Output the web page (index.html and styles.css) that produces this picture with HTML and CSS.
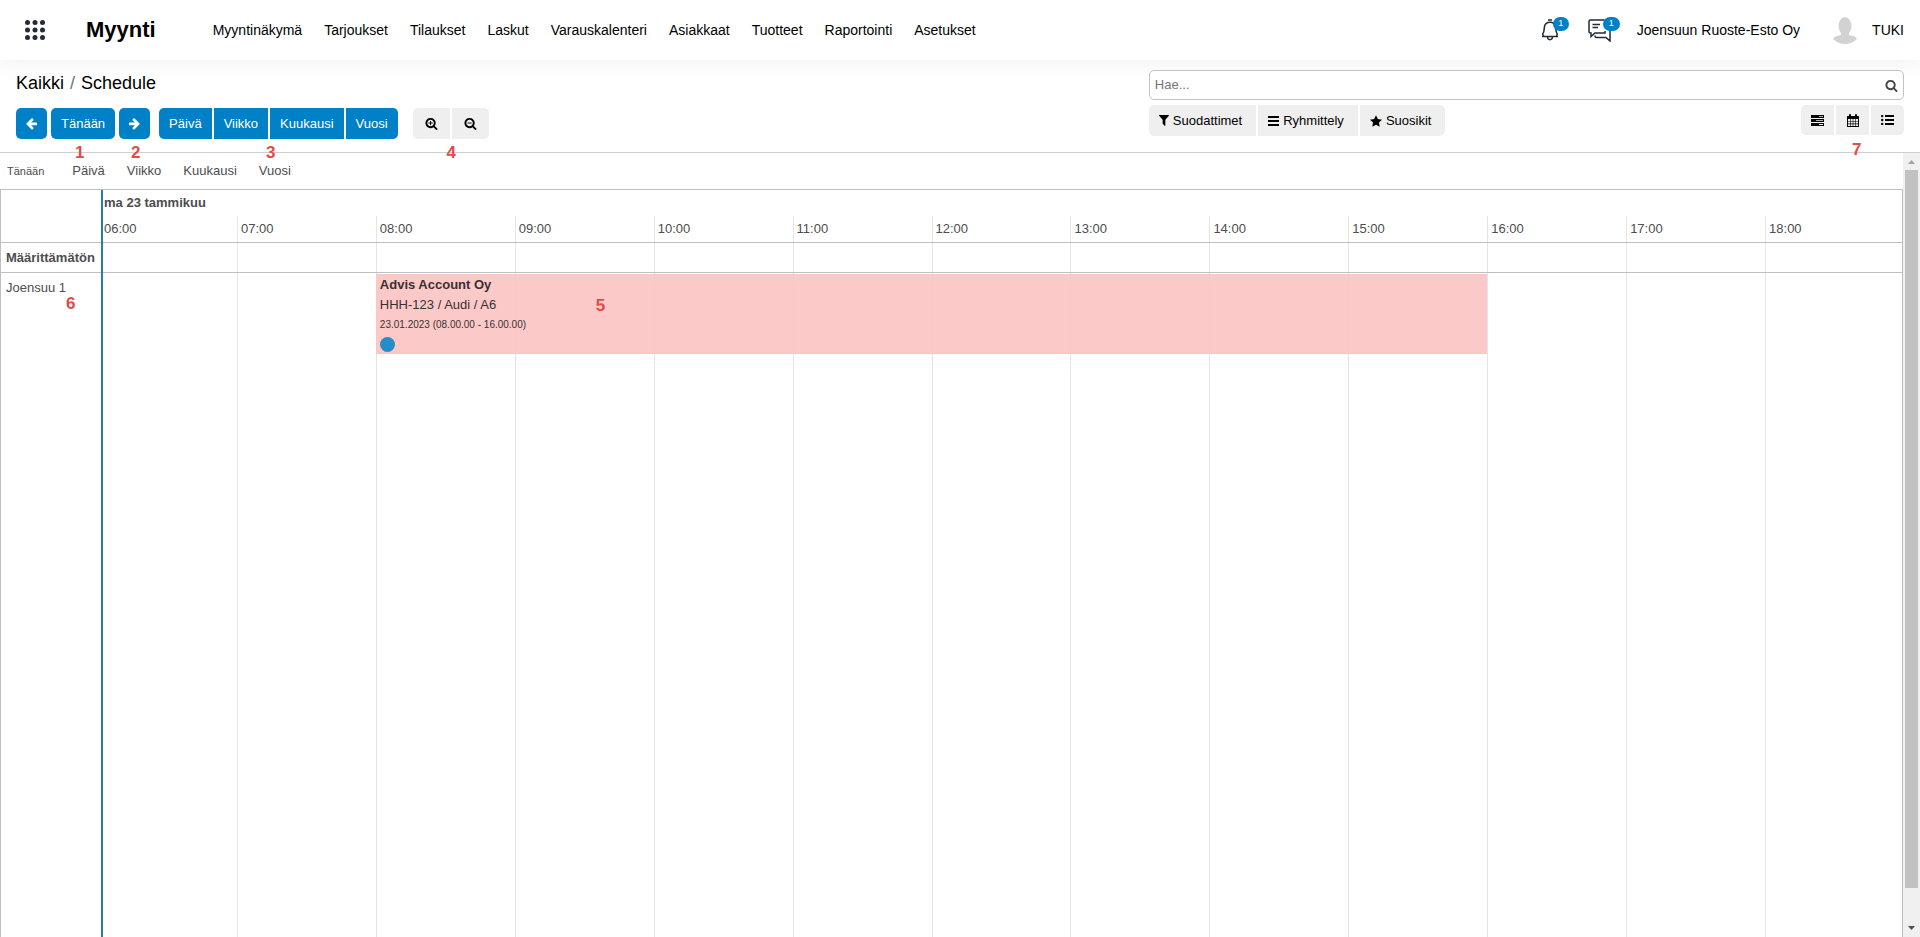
FILE: index.html
```html
<!DOCTYPE html>
<html lang="fi">
<head>
<meta charset="utf-8">
<title>Myynti - Schedule</title>
<link rel="stylesheet" href="styles.css">
</head>
<body>
<svg class="defs" aria-hidden="true">
  <symbol id="arrow" viewBox="0 0 1792 1792"><path d="M1664 896v128q0 53-32.5 90.5t-84.5 37.5h-704l293 294q38 36 38 90t-38 90l-75 76q-37 37-90 37-52 0-91-37l-651-652q-37-37-37-90 0-52 37-91l651-650q38-38 91-38 52 0 90 38l75 74q38 38 38 91t-38 91l-293 293h704q52 0 84.5 37.5t32.5 90.5z"/></symbol>
  <symbol id="search" viewBox="0 0 1792 1792"><path d="M1216 832q0-185-131.5-316.5t-316.5-131.5-316.5 131.5-131.5 316.5 131.5 316.5 316.5 131.5 316.5-131.5 131.5-316.5zm512 832q0 52-38 90t-90 38q-54 0-90-38l-343-342q-179 124-399 124-143 0-273.5-55.5t-225-150-150-225-55.5-273.5 55.5-273.5 150-225 225-150 273.5-55.5 273.5 55.5 225 150 150 225 55.5 273.5q0 220-124 399l343 343q37 37 37 90z"/></symbol>
</svg>

<header class="topbar">
  <button class="apps" type="button" aria-label="Sovellukset">
    <svg width="20" height="20" viewBox="0 0 20 20"><g fill="#222b36"><circle cx="2.5" cy="2.5" r="2.5"/><circle cx="10" cy="2.5" r="2.5"/><circle cx="17.5" cy="2.5" r="2.5"/><circle cx="2.5" cy="10" r="2.5"/><circle cx="10" cy="10" r="2.5"/><circle cx="17.5" cy="10" r="2.5"/><circle cx="2.5" cy="17.5" r="2.5"/><circle cx="10" cy="17.5" r="2.5"/><circle cx="17.5" cy="17.5" r="2.5"/></g></svg>
  </button>
  <a class="brand" href="#">Myynti</a>
  <nav class="menu">
    <a href="#">Myyntinäkymä</a>
    <a href="#">Tarjoukset</a>
    <a href="#">Tilaukset</a>
    <a href="#">Laskut</a>
    <a href="#">Varauskalenteri</a>
    <a href="#">Asiakkaat</a>
    <a href="#">Tuotteet</a>
    <a href="#">Raportointi</a>
    <a href="#">Asetukset</a>
  </nav>
  <div class="tray">
    <button class="tray-btn bell" type="button" aria-label="Toiminnot">
      <svg width="18" height="22" viewBox="0 0 18 22" fill="none" stroke="#222b36" stroke-width="1.5"><path d="M7 1h4M1 17.500h16M2.500 17.500c0-1-.5-1.500-.8-2.500 1.800-2 1.300-5 1.800-7.500C4 4.800 6 3.200 9 3.200s5 1.600 5.500 4.300c.5 2.500 0 5.500 1.800 7.500-.3 1-.8 1.500-.8 2.500M6.500 18c.3 3.500 4.700 3.500 5 0"/></svg>
      <span class="count">1</span>
    </button>
    <button class="tray-btn chat" type="button" aria-label="Viestit">
      <svg width="23" height="23" viewBox="0 0 23 23" fill="none" stroke="#222b36" stroke-width="1.500"><path d="M17 12v2H7l-4 3.500V14H2.500Q1 14 1 12.500v-10Q1 1 2.500 1h13Q17 1 17 2.500M4.500 5.500H12M4.500 8.500H10M19 9h1.500Q22 9 22 10.500V22l-4-3.500H8.500Q7 18.500 7 17v-.5"/></svg>
      <span class="count">1</span>
    </button>
    <a class="company" href="#">Joensuun Ruoste-Esto Oy</a>
    <a class="user" href="#">
      <svg width="26" height="27" viewBox="0 0 26 27" fill="#d2d2d2"><ellipse cx="13" cy="9" rx="6.500" ry="9"/><path d="M9 14h8v4q7 1 8 4-5 5-12 5T1 22q1-3 8-4z"/></svg>
      TUKI</a>
  </div>
</header>

<section class="panel">
  <div class="panel-left">
    <div class="crumbs"><a href="#">Kaikki</a><span class="slash">/</span><span>Schedule</span></div>
    <div class="actions">
      <button class="btn primary square" type="button" aria-label="Edellinen"><svg class="ic" ><use href="#arrow"/></svg></button>
      <div class="pin-host"><button class="btn primary" type="button">Tänään</button><span class="pin pin-today">1</span></div>
      <div class="pin-host"><button class="btn primary square" type="button" aria-label="Seuraava"><svg class="ic flip"><use href="#arrow"/></svg></button><span class="pin pin-next">2</span></div>
      <div class="group scale pin-host">
        <button class="btn primary" type="button">Päivä</button>
        <button class="btn primary" type="button">Viikko</button>
        <button class="btn primary" type="button">Kuukausi</button>
        <button class="btn primary" type="button">Vuosi</button>
        <span class="pin pin-scale">3</span>
      </div>
      <div class="group zoom pin-host">
        <button class="btn" type="button" aria-label="Lähennä"><svg class="ic" viewBox="0 0 1792 1792"><use href="#search"/><path d="M480 768h576v128H480zM704 544h128v576H704z"/></svg></button>
        <button class="btn" type="button" aria-label="Loitonna"><svg class="ic" viewBox="0 0 1792 1792"><use href="#search"/><path d="M480 768h576v128H480z"/></svg></button>
        <span class="pin pin-zoom">4</span>
      </div>
    </div>
  </div>
  <div class="panel-right">
    <div class="searchbox">
      <input type="text" placeholder="Hae..." aria-label="Hae">
      <svg class="ic"><use href="#search"/></svg>
    </div>
    <div class="filters">
      <div class="group">
        <button class="btn" type="button"><svg width="10" height="11" viewBox="192 256 1410 1420" preserveAspectRatio="none"><path d="M1595 295q17 41-14 70l-493 493v742q0 42-39 59-13 5-25 5-27 0-45-19l-256-256q-19-19-19-45v-486l-493-493q-31-29-14-70 17-39 59-39h1280q42 0 59 39z"/></svg>Suodattimet</button>
        <button class="btn" type="button"><svg width="11" height="10" viewBox="0 0 11 10"><path d="M0 0h11v2H0zM0 4h11v2H0zM0 8h11v2H0z"/></svg>Ryhmittely</button>
        <button class="btn" type="button"><svg width="12" height="12" viewBox="0 0 24 24"><path d="M12 .6l3.700 7.500 8.300 1.200-6 5.800 1.400 8.300L12 19.500l-7.400 3.900L6 15.100 0 9.300l8.300-1.200z"/></svg>Suosikit</button>
      </div>
      <div class="group views pin-host">
        <button class="btn" type="button" aria-label="Aikajana"><svg width="13" height="11" viewBox="0 0 13 11"><path d="M0 0h13v3H0zM0 4h13v3H0zM0 8h13v3H0z"/><path fill="#aaa" d="M8 1h4v1H8zM5 5h7v1H5z"/><path fill="#efefef" d="M8 9h4v1H8z"/></svg></button>
        <button class="btn" type="button" aria-label="Kalenteri"><svg width="12" height="13" viewBox="0 0 12 13"><path fill-rule="evenodd" d="M0 2.500Q0 2 .7 2H2V.8Q2 0 3 0t1 .8V2h4V.8Q8 0 9 0t1 .8V2h1.300q.7 0 .7.5v10q0 .5-.5.5H.5q-.5 0-.5-.5zM1 5v2h2V5zm2.600 0v2h2.100V5zm2.700 0v2h2.100V5zM9 5v2h2V5zM1 7.600v2h2v-2zm2.600 0v2h2.100v-2zm2.700 0v2h2.100v-2zM9 7.600v2h2v-2zM1 10.200V12h2v-1.800zm2.600 0V12h2.100v-1.800zm2.700 0V12h2.100v-1.800zM9 10.200V12h2v-1.800z"/></svg></button>
        <button class="btn" type="button" aria-label="Luettelo"><svg width="13" height="10" viewBox="0 0 13 10"><path d="M4 0h9v2H4zM4 4h9v2H4zM4 8h9v2H4z"/><circle cx="1.200" cy="1" r="1.200"/><circle cx="1.200" cy="5" r="1.200"/><circle cx="1.200" cy="9" r="1.200"/></svg></button>
        <span class="pin pin-views">7</span>
      </div>
    </div>
  </div>
</section>

<main class="content">
  <div class="calendar">
    <div class="ranges">
      <button class="now" type="button">Tänään</button>
      <button type="button">Päivä</button>
      <button type="button">Viikko</button>
      <button type="button">Kuukausi</button>
      <button type="button">Vuosi</button>
    </div>
    <div class="timeline">
      <div class="labels">
        <div class="row-head"></div>
        <div class="row-unassigned">Määrittämätön</div>
        <div class="row-resource pin-host">Joensuu 1<span class="pin pin-resource">6</span></div>
      </div>
      <div class="slots">
        <div class="row-head">
          <div class="day">ma 23 tammikuu</div>
          <div class="hours cols"><span>06:00</span><span>07:00</span><span>08:00</span><span>09:00</span><span>10:00</span><span>11:00</span><span>12:00</span><span>13:00</span><span>14:00</span><span>15:00</span><span>16:00</span><span>17:00</span><span>18:00</span></div>
        </div>
        <div class="row-unassigned cols"><i></i><i></i><i></i><i></i><i></i><i></i><i></i><i></i><i></i><i></i><i></i><i></i><i></i></div>
        <div class="row-resource cols">
          <i></i><i></i><i></i><i></i><i></i><i></i><i></i><i></i><i></i><i></i><i></i><i></i><i></i>
          <div class="events cols">
            <article class="event pin-host">
              <strong>Advis Account Oy</strong>
              <span>HHH-123 / Audi / A6</span>
              <small>23.01.2023 (08.00.00 - 16.00.00)</small>
              <b class="dot"></b>
              <span class="pin pin-event">5</span>
            </article>
          </div>
        </div>
      </div>
    </div>
  </div>
  <div class="scrollbar" aria-hidden="true">
    <svg width="7" height="4" viewBox="0 0 7 4"><path fill="#a3a3a3" d="M0 4L3.500 0 7 4z"/></svg>
    <div class="track"><div class="thumb"></div></div>
    <svg width="7" height="4" viewBox="0 0 7 4"><path fill="#505050" d="M0 0L3.500 4 7 0z"/></svg>
  </div>
</main>
</body>
</html>
```
FILE: styles.css
```css
* { box-sizing: border-box; }

body {
  margin: 0;
  min-height: 100vh;
  display: flex;
  flex-direction: column;
  background: #fff;
  color: #000;
  font: 13px/20px "Liberation Sans", Arial, sans-serif;
}

a { color: inherit; text-decoration: none; }
button, input { font: inherit; color: inherit; }
button { border: 0; background: none; padding: 0; cursor: pointer; }
svg { display: block; flex: none; }
.defs { position: absolute; width: 0; height: 0; }
.ic { width: 13px; height: 13px; fill: currentColor; }
.flip { transform: scaleX(-1); }

/* Top bar */
.topbar {
  display: flex;
  align-items: center;
  height: 60px;
  padding: 0 16px 0 25px;
  font-size: 14px;
  box-shadow: 0 5px 20px rgba(0, 0, 0, .05);
}
.brand { margin-left: 41px; font-size: 22px; line-height: 28px; font-weight: bold; }
.menu { display: flex; gap: 22px; margin-left: 57px; }
.tray { display: flex; align-items: center; margin-left: auto; }
.tray-btn { position: relative; }
.bell { margin-right: 29px; }
.chat { margin-right: 26px; }
.count {
  position: absolute;
  top: -2px;
  left: 12px;
  width: 16px;
  height: 14px;
  border-radius: 7px;
  background: #0080c6;
  color: #fff;
  font-size: 9px;
  line-height: 13px;
}
.chat .count { left: 15px; width: 17px; }
.user { display: flex; align-items: center; gap: 14px; margin-left: 32px; }

/* Control panel */
.panel {
  display: flex;
  justify-content: space-between;
  padding: 10px 16px 13px;
  border-bottom: 1px solid #cfcfcf;
}
.panel-right { width: 40%; }
.crumbs { display: flex; gap: 6px; font-size: 18px; line-height: 26px; }
.slash { color: #6c757d; }
.actions { display: flex; gap: 4px; margin-top: 12px; }
.btn {
  display: flex;
  align-items: center;
  justify-content: center;
  gap: 4px;
  height: 31px;
  padding: 0 10px;
  border-radius: 5px;
  background: #efefef;
}
.primary { background: #0080c6; color: #fff; }
.square { width: 31px; }
.group { display: flex; gap: 2px; }
.group .btn { border-radius: 0; }
.group .btn:first-child { border-radius: 5px 0 0 5px; }
.group .btn:nth-last-child(1 of .btn) { border-radius: 0 5px 5px 0; }
.scale { margin-left: 5px; }
.zoom { margin-left: 11px; }
.zoom .btn { width: 37px; }
.searchbox {
  display: flex;
  align-items: center;
  height: 30px;
  padding: 0 5px;
  border: 1px solid #c4c4c4;
  border-radius: 5px;
  background: #fff;
  color: #444;
}
.searchbox input { flex: 1; min-width: 0; border: 0; padding: 0; outline: 0; background: none; }
.searchbox input::placeholder { color: #757575; }
.filters { display: flex; justify-content: space-between; margin-top: 5px; }
.filters .btn { padding-right: 14px; }
.filters .views .btn { width: 33px; height: 30px; padding: 0; }

/* Numbered callouts */
.pin-host { position: relative; }
.pin {
  position: absolute;
  color: #e04b4b;
  font-size: 17px;
  line-height: 20px;
  font-weight: bold;
}
.pin-today { top: 35px; left: 24px; }
.pin-next { top: 35px; left: 12px; }
.pin-scale { top: 35px; left: 107px; }
.pin-zoom { top: 35px; left: 34px; }
.pin-views { top: 35px; left: 51px; }
.pin-resource { top: 21px; left: 65px; }
.pin-event { top: 21px; left: 220px; }

/* Calendar */
.content { flex: 1; display: flex; }
.calendar { flex: 1; display: flex; flex-direction: column; color: #4d4d4d; }
.ranges { display: flex; align-items: center; gap: 22px; height: 36px; padding: 0 7px; }
.ranges .now { font-size: 11px; margin-right: 6px; }
.timeline { flex: 1; display: flex; border: 1px solid #bfbfbf; border-width: 1px 1px 0; }
.labels, .slots { display: flex; flex-direction: column; }
.labels { width: 100px; }
.slots { flex: 1; border-left: 2px solid #2a7da8; }
.row-head { height: 53px; border-bottom: 1px solid #bfbfbf; }
.row-unassigned { height: 30px; border-bottom: 1px solid #bfbfbf; }
.row-resource { position: relative; flex: 1; }
.labels .row-unassigned { padding: 5px; font-weight: bold; }
.labels .row-resource { padding: 5px; }
.day { height: 26px; padding: 3px 1px; font-weight: bold; }
.cols { display: grid; grid-template-columns: 134fr repeat(11, 139fr) 137fr; }
.hours { height: 26px; }
.cols > i, .cols > span { border-left: 1px solid #e5e5e5; }
.cols > :first-child { border-left: 0; }
.hours > span { padding: 3px; }
.hours > :first-child { padding-left: 1px; }
.events { position: absolute; inset: 0; }
.events > .event {
  grid-column: 3 / 11;
  align-self: start;
  display: flex;
  flex-direction: column;
  height: 80px;
  margin-top: 1px;
  padding: 0 3px 0 4px;
  border: 1px solid #f6c6c6;
  border-width: 1px 0;
  background: rgba(252, 197, 197, .93);
  color: #3b3030;
}
.event small { font-size: 10px; }
.dot { width: 15px; height: 15px; margin-top: 2px; border-radius: 50%; background: #268dc8; }

.scrollbar {
  display: flex;
  flex-direction: column;
  align-items: center;
  width: 17px;
  padding: 7px 0;
  background: #f0f0f0;
}
.track { flex: 1; width: 13px; margin: 6px 0 0; }
.thumb { height: 95%; background: #c1c1c1; }
```
